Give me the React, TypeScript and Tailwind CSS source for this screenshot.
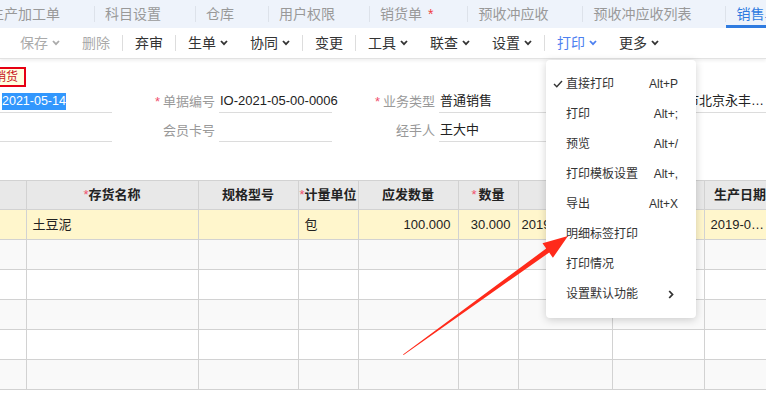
import React from 'react'

const tabs = [
  { name: '生产加工单' },
  { name: '科目设置' },
  { name: '仓库' },
  { name: '用户权限' },
  { name: '销货单', dirty: true },
  { name: '预收冲应收' },
  { name: '预收冲应收列表' },
]

type Tool = { label: string; drop?: boolean; off?: boolean; blue?: boolean; sep?: boolean }

const tools: Tool[] = [
  { label: '保存', drop: true, off: true },
  { label: '删除', off: true },
  { label: '', sep: true },
  { label: '弃审' },
  { label: '', sep: true },
  { label: '生单', drop: true },
  { label: '协同', drop: true },
  { label: '', sep: true },
  { label: '变更' },
  { label: '', sep: true },
  { label: '工具', drop: true },
  { label: '联查', drop: true },
  { label: '设置', drop: true },
  { label: '', sep: true },
  { label: '打印', drop: true, blue: true },
  { label: '更多', drop: true },
]

const menu = [
  { label: '直接打印', key: 'Alt+P', checked: true },
  { label: '打印', key: 'Alt+;' },
  { label: '预览', key: 'Alt+/' },
  { label: '打印模板设置', key: 'Alt+,' },
  { label: '导出', key: 'Alt+X' },
  { label: '明细标签打印' },
  { label: '打印情况' },
  { label: '设置默认功能', sub: true },
]

// 列宽
const cols = [26, 172, 100, 60, 100, 60, 94, 92, 72]

function Chevron({ color = '#333' }: { color?: string }) {
  return (
    <svg width="8" height="6" viewBox="0 0 8 6" className="ml-[4px]">
      <polyline points="1,1 4,4.2 7,1" fill="none" stroke={color} strokeWidth="1.8" />
    </svg>
  )
}

function Field({ label, star, value }: { label: string; star?: boolean; value?: string }) {
  return (
    <div className="flex shrink-0 items-center w-[220px]">
      <div className="w-[103px] shrink-0 text-right text-[13px] text-[#999]">
        {star && <span className="text-[#f0506e] mr-[3px]">*</span>}
        {label}
      </div>
      <div className="ml-[4px] w-[113px] shrink-0 h-[22px] border-b border-[#dcdcdc] flex items-center pl-[1px] text-[13px] text-[#222] whitespace-nowrap">
        {value}
      </div>
    </div>
  )
}

export default function App() {
  const empty = [0, 1, 2, 3, 4]

  return (
    <div className="relative w-[766px] h-[395px] overflow-hidden bg-white font-['Liberation_Sans','Noto_Sans_CJK_SC',sans-serif]">
      {/* 标签栏 */}
      <div className="h-[28px] bg-[#eef3fb] flex items-center -ml-[20px] whitespace-nowrap">
        {tabs.map((t) => (
          <React.Fragment key={t.name}>
            <div className="h-full shrink-0 flex items-center pl-[10px] pr-[34px] text-[14px] text-[#999]">
              {t.name}
              {t.dirty && <span className="ml-[6px] text-[#f04040]">*</span>}
            </div>
            <div className="w-px shrink-0 h-[16px] bg-[#dde2ea]" />
          </React.Fragment>
        ))}
        <div className="relative shrink-0 h-full flex items-center pl-[10px] pr-[20px] text-[14px] text-[#2f7be0]">
          销售单
          <div className="absolute left-0 right-0 bottom-0 h-[3px] bg-[#2f7be0]" />
        </div>
      </div>

      {/* 工具栏 */}
      <div className="h-[31px] flex items-center pl-[9px] border-b border-[#e2e2e2] shadow-[0_2px_3px_rgba(0,0,0,0.06)] whitespace-nowrap">
        {tools.map((t, i) =>
          t.sep ? (
            <div key={i} className="w-px shrink-0 h-[16px] mx-[1px] bg-[#dddddd]" />
          ) : (
            <div
              key={i}
              className={
                'flex shrink-0 items-center px-[11px] text-[14px] ' +
                (t.off ? 'text-[#aaa]' : t.blue ? 'text-[#4d80f0]' : 'text-[#333]')
              }
            >
              {t.label}
              {t.drop && <Chevron color={t.off ? '#aaa' : t.blue ? '#4d80f0' : '#333'} />}
            </div>
          )
        )}
      </div>

      {/* 表头字段 */}
      <div className="pt-[5px]">
        <div className="-ml-[14px] inline-flex items-center h-[20px] px-[6px] border-2 border-[#e60012] bg-[#ffffe0] text-[12px] text-[#c8161d]">
          销货
        </div>

        <div className="flex items-center mt-[2px]">
          <div className="w-[112px] shrink-0 h-[23px] border-b border-[#dcdcdc] flex items-center pl-[2px]">
            <span className="bg-[#3297fd] text-white text-[12.5px] leading-[17px]">2021-05-14</span>
          </div>
          <Field label="单据编号" star value="IO-2021-05-00-0006" />
          <Field label="业务类型" star value="普通销售" />
          <Field label="客户" star value="北京市北京永丰…" />
        </div>

        <div className="flex items-center mt-[6px]">
          <div className="w-[112px] shrink-0 h-[23px] border-b border-[#dcdcdc]" />
          <Field label="会员卡号" />
          <Field label="经手人" value="王大中" />
        </div>
      </div>

      {/* 明细表 */}
      <table className="mt-[38px] table-fixed border-collapse w-[776px] text-[13px] text-[#222]">
        <colgroup>
          {cols.map((w, i) => (
            <col key={i} style={{ width: w }} />
          ))}
        </colgroup>
        <thead>
          <tr className="h-[29px] bg-[#e8e8e8] font-bold">
            <th className="border border-[#d2d2d2] border-l-0" />
            <th className="border border-[#d2d2d2]">
              <span className="text-[#f0506e] font-normal">*</span>存货名称
            </th>
            <th className="border border-[#d2d2d2]">规格型号</th>
            <th className="border border-[#d2d2d2] whitespace-nowrap overflow-hidden">
              <span className="text-[#f0506e] font-normal">*</span>计量单位
            </th>
            <th className="border border-[#d2d2d2]">应发数量</th>
            <th className="border border-[#d2d2d2]">
              <span className="text-[#f0506e] font-normal mr-[2px]">*</span>数量
            </th>
            <th className="border border-[#d2d2d2]">批号</th>
            <th className="border border-[#d2d2d2]">有效期至</th>
            <th className="border border-[#d2d2d2]">生产日期</th>
          </tr>
        </thead>
        <tbody>
          <tr className="h-[30px] bg-[#fff6cc]">
            <td className="border border-[#d2d2d2] border-l-0" />
            <td className="border border-[#d2d2d2] px-[6px]">土豆泥</td>
            <td className="border border-[#d2d2d2]" />
            <td className="border border-[#d2d2d2] px-[6px]">包</td>
            <td className="border border-[#d2d2d2] px-[7px] text-right">100.000</td>
            <td className="border border-[#d2d2d2] px-[7px] text-right">30.000</td>
            <td className="border border-[#d2d2d2] px-[3px] whitespace-nowrap overflow-hidden">2019-05-01</td>
            <td className="border border-[#d2d2d2] px-[6px]" />
            <td className="border border-[#d2d2d2] px-[6px] truncate">2019-05-01</td>
          </tr>
          {empty.map((r) => (
            <tr key={r} className={'h-[30px] ' + (r % 2 === 0 ? 'bg-[#f9f9f9]' : 'bg-white')}>
              {cols.map((_, i) => (
                <td key={i} className={'border border-[#d2d2d2]' + (i === 0 ? ' border-l-0' : '')} />
              ))}
            </tr>
          ))}
        </tbody>
      </table>

      {/* 打印下拉菜单 */}
      <div className="absolute left-[546px] top-[60px] w-[150px] py-[9px] bg-white rounded-[4px] shadow-[0_2px_8px_rgba(0,0,0,0.18)] text-[12px] text-[#333]">
        {menu.map((m) => (
          <div key={m.label} className="relative h-[30px] flex items-center justify-between pl-[20px] pr-[18px] whitespace-nowrap">
            {m.checked && (
              <svg width="10" height="8" viewBox="0 0 10 8" className="absolute left-[7px] top-[11px]">
                <polyline points="1,4 3.8,6.8 9,1" fill="none" stroke="#333" strokeWidth="1.4" />
              </svg>
            )}
            <span>{m.label}</span>
            {m.key && <span>{m.key}</span>}
            {m.sub && (
              <svg width="6" height="9" viewBox="0 0 6 9" className="mr-[4px]">
                <polyline points="1.2,1 4.5,4.5 1.2,8" fill="none" stroke="#333" strokeWidth="1.8" />
              </svg>
            )}
          </div>
        ))}
      </div>

      {/* 红色箭头标注 */}
      <svg className="absolute left-0 top-0 pointer-events-none" width="766" height="395">
        <polygon
          points="403,354.5 546.2,248.5 542.5,243.2 568,236 552.9,257.8 549.2,252.5 403.6,355"
          fill="#ff2a1a"
        />
      </svg>
    </div>
  )
}
